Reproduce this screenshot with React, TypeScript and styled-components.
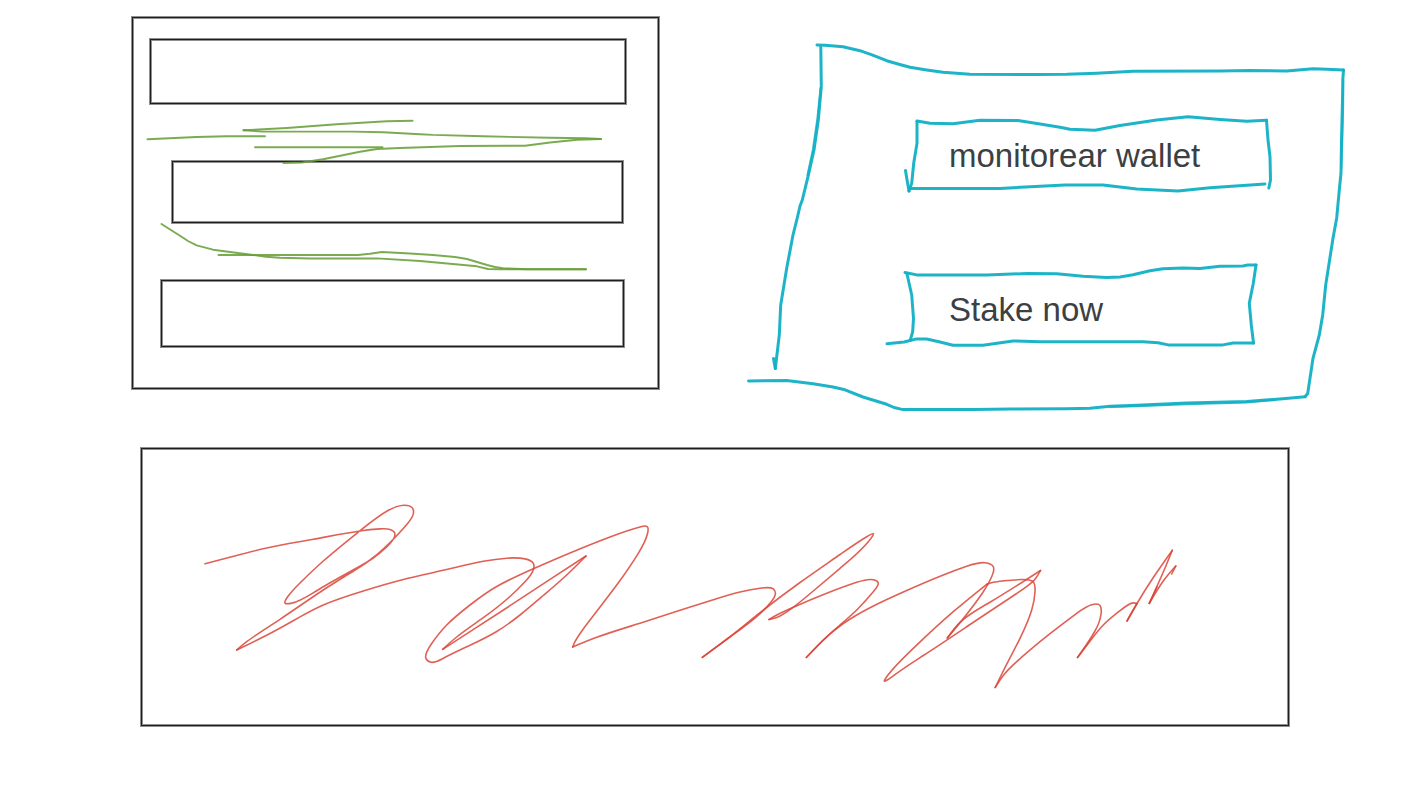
import React from "react";
import styled, { createGlobalStyle } from "styled-components";

const GlobalStyle = createGlobalStyle`
  * { box-sizing: border-box; }
  body {
    margin: 0;
    background: #ffffff;
    color: #3c4043;
    font-family: "Liberation Sans", Arial, Helvetica, sans-serif;
  }
`;

const Board = styled.main`
  padding: 17px 76px 74px 132px;
`;

const TopRow = styled.div`
  display: grid;
  grid-template-columns: 527fr 600fr;
  column-gap: 87px;
  align-items: start;
`;

const Frame = styled.div`
  border: 1px solid #1f1f1f;
  box-shadow: 0 0 0 1px #8f8f8f, inset 0 0 0 1px #8f8f8f;
`;

const ListFrame = styled(Frame)`
  position: relative;
  display: flex;
  flex-direction: column;
  gap: 57px;
  padding: 21px 0 41px;
`;

const Bar = styled(Frame)<{ $height: number; $left: number; $right: number }>`
  height: ${(p) => p.$height}px;
  margin: 0 ${(p) => p.$right}px 0 ${(p) => p.$left}px;
`;

const SignatureFrame = styled(Frame)`
  margin: 36px 57px 0 9px;
`;

const ActionPanel = styled.section`
  position: relative;
  display: flex;
  flex-direction: column;
  gap: 74px;
  padding: 96px 72px 65px 157px;
`;

const ActionButton = styled.button`
  position: relative;
  padding: 24px 46px 18px;
  border: 0;
  background: none;
  color: inherit;
  font: inherit;
  font-size: 33px;
  line-height: 38px;
  text-align: left;
  white-space: nowrap;
  cursor: pointer;
`;

const Ink = styled.svg`
  display: block;
  width: 100%;
  overflow: visible;
  fill: none;
  stroke-linecap: round;
  stroke-linejoin: round;
`;

const OverlayInk = styled(Ink)`
  position: absolute;
  inset: 0;
  height: 100%;
  pointer-events: none;
`;

type Point = [number, number];

const parse = (points: string): Point[] =>
  points
    .trim()
    .split(/\s+/)
    .map((pair) => pair.split(",").map(Number) as Point);

/* Marker strokes keep the short straight runs of the pen. */
const straight = (points: string): string => `M${points.trim().split(/\s+/).join("L")}`;

/* Natural cubic spline through the given pen positions. */
function curve(points: string): string {
  const p = parse(points);
  const n = p.length;
  if (n < 3) return straight(points);
  const h = p.slice(1).map((q, i) => Math.pow(Math.hypot(q[0] - p[i][0], q[1] - p[i][1]), 0.75));
  const slopes = h.map((len, i) => [0, 1].map((k) => (p[i + 1][k] - p[i][k]) / len));
  const m = p.map((_, i) => [...slopes[Math.min(i, n - 2)]]);
  for (let pass = 0; pass < 60; pass++) {
    for (let k = 0; k < 2; k++) {
      m[0][k] = (3 * slopes[0][k] - m[1][k]) / 2;
      for (let i = 1; i < n - 1; i++) {
        const a = h[i - 1];
        const b = h[i];
        m[i][k] =
          (3 * (b * slopes[i - 1][k] + a * slopes[i][k]) - b * m[i - 1][k] - a * m[i + 1][k]) /
          (2 * (a + b));
      }
      m[n - 1][k] = (3 * slopes[n - 2][k] - m[n - 2][k]) / 2;
    }
  }
  let path = `M${p[0].join(" ")}`;
  for (let i = 0; i < n - 1; i++) {
    const t = h[i] / 3;
    const c1 = [0, 1].map((k) => p[i][k] + m[i][k] * t);
    const c2 = [0, 1].map((k) => p[i + 1][k] - m[i + 1][k] * t);
    path += `C${[...c1, ...c2, ...p[i + 1]].map((v) => v.toFixed(2)).join(" ")}`;
  }
  return path;
}

interface StrokesProps {
  lines: string[];
  color: string;
  width: number;
  opacity: number;
  smooth?: boolean;
}

const Strokes = ({ lines, color, width, opacity, smooth }: StrokesProps) => (
  <g stroke={color} strokeWidth={width} strokeOpacity={opacity}>
    {lines.map((line) => (
      <path key={line} d={smooth ? curve(line) : straight(line)} />
    ))}
  </g>
);

const greenLines = [
  "147.5,139.3 196.7,137 226.7,136.2 265,136.2",
  "412.5,120.8 386.7,121.3 336.7,124.3 286.7,128 243.5,130.3",
  "243.5,130.3 263,131.6 353,131.6 383,132.2 420,134.2 433,134.9 483,136.3 550,137.8 585,138.3 601,139",
  "601,139 577,139.8 550,142.5 525,145.7 460,146 400,148 377,149 360,151.7 323,159.3 302,162.5 283.5,163",
  "255,147.2 382.5,147.2",
  "161.5,224 180,235.7 188,241 196.7,245.3 213,249.7 253,255 266,256.8 280,257.7 310,258.5 377,258.4 420,261 477,266.3 488,269 500,269.3 586,269.3",
  "218.5,255 358,255 370,253.8 381.7,252 410,253.5 433,255 455,257 467,259 487,265 495,267 503,268.2 527,269.3 586,269.3",
];

const panelLines = [
  "817,45 825,45.2 843,46.7 860,50.7 872,54.8 886.7,60.7 898,64 910,67.3 926.7,70 943,72.3 970,74.2 1040,74.5 1066.7,74.3 1096.7,73.2 1133,71.2 1220,71 1250,70.6 1286.7,71 1313,68.8 1326.7,69.3 1343.5,70",
  "1343.5,70 1342.8,80 1342.5,100 1341.5,140 1341,173 1339.3,190 1336.7,218 1333,238.3 1325.7,285 1322.7,315 1319.3,335 1313,358.3 1307.7,393.5 1305,396.7",
  "1305,396.7 1280,399 1246.7,401.5 1186.7,403 1136.7,405.3 1110,406.2 1090,408.3 1066.7,408.7 1011.7,408.9 973,409.5 902,409.4 894,407.5 886.7,404.3 863,397 845,389.8 833,387 813,383.7 786.7,380.5 748.5,381",
  "820.8,47 821.3,86.7 818.3,120 814,150 808,176.7 802.3,200 800,206 797.5,217 793,235 786.7,268.3 780.7,305 779.3,335 775.3,368.5",
  "775.3,368.5 773.5,358.5",
];

/* Second pass of the pen over the edges that come out heavier. */
const panelRetrace = [
  "820.5,88 817.2,120 812.8,150 807.5,175",
  "1343.2,80 1343.2,104 1342.3,140 1341.2,168",
  "1110,407 1136.7,406.2 1186.7,404.2 1246.7,402.6 1275,400",
];

const walletLines = [
  "917,121 930,123.3 953,123.7 980,120.2 1018,120.4 1040,124 1060,127.3 1070,129.3 1095,130.3 1120,125.5 1156.7,120 1188,116.8 1220,119.5 1246.7,121.2 1266.5,120.3",
  "1266.5,120.3 1268,140 1270,156.7 1270.5,180 1268.8,188",
  "917,121.5 917,143.3 913.7,163.3 911.7,183.3 909,191",
  "909,191 906.7,178 905.5,170.5",
  "910,188.6 1000,188.4 1040,186.2 1065,184.9 1103,184.9 1136.7,189.1 1178,190.9 1210,187.7 1265,183.9",
];

const stakeLines = [
  "905,272.5 916.7,274.9 986.7,275 1026.7,273.5 1056.7,273.7 1083,276.3 1106.7,277.4 1120,277 1133,274.7 1150,270.8 1163,268.7 1183,267.9 1200,268.4 1220,266.2 1243,266 1248,264.9 1256,265",
  "1256,265 1253.3,283.3 1249.3,303.3 1251.3,325 1253.5,343",
  "1253.5,343 1233,343 1223,344.9 1168,344.9 1158,342.8 1143,341.8 1040,341.7 1013,340.9 983,345.3 953,345.3 940,342 926.7,339 916.7,338.9 904,342 887,343.8",
  "906.9,273.5 911.7,295 913.5,318.3 912.7,331.7 910.3,340",
];

const signatureLines = [
  "205,563.7 231.7,556.7 266.7,548 313.3,539.3 360,531 380,528.9 390,529.5 394.7,533 393.7,538.5 386.7,547 373.3,558 356.7,568 316.7,590.7 291,603.4 285,603 287.5,597 300,583 323.3,561 360,530.7 388,510.5 404,505.2 412,507.5 413.5,513 408,523 395,537.5 373.3,557.5 356.7,569 323.3,590 280,619.3 246.7,641.7 236.7,650",
  "236.7,650 273.3,631.7 300,616.9 323.3,605 363.3,591 403.3,579.5 443.3,570.3 483.3,561.3 506.7,558.2 525,558.9 533.3,563.3 533.3,570 525,581.7 510,596.5 483.3,617.7 456.7,637 442.7,649.3",
  "442.7,649.3 470,631.7 510,605.7 550,579.3 586,556",
  "586,556 566.7,575 543.3,595.5 520,615 496.7,631.5 470,645.3 443.3,658.3 431,662.3 425.9,658.3 431.7,643.5 446.7,625 470,605 495,587.5 533.3,568.7 570,552.9 610,536.9 640,526.9 647.3,526.7 647.6,533.3 638.3,553.3 616.7,585 590,620 575,641.7 572.7,647",
  "572.7,647 596.7,637.3 640,623.2 680,610.3 713.3,599.7 740,592 761.7,588 773.3,588.9 775.5,593.3 770,603.3 756.7,616.7 730,637 702.3,657.3",
  "702.3,657.3 730,636.7 760,612.7 800,582.5 840,554.5 866.7,536.7 873.3,533.7 868.3,541.7 840,568.3 813.3,591 790,609.7 776.7,617.5 769,619.5",
  "769,619.5 774,616.5 793.3,607.3 826.7,593.3 856.7,582.3 873.3,579.7 878.2,582.7 873.3,591.7 856.7,610 840,625 826.7,636.8 806.3,657.5",
  "806.3,657.5 823.3,640 843.3,623.5 870,607.7 903.3,592 943.3,575 966.7,566.3 985,562.7 993.3,566.7 991.7,576.7 983.3,591.7 960,622.7 947.3,638",
  "947.3,638 960,622.3 990,602.2 1040.5,570.5",
  "1040.5,570.5 1035,579.3 1016.7,593.5 970,624.5 923.3,655.5 896.7,673.3 884.3,681 886.7,676.7 913.3,648.3 953.3,611.7 986.7,584.3",
  "986.7,584.3 993.3,582.3 1003.3,580.9 1026.7,579.7 1033.3,582 1035,591.7 1031.7,610 1020,638.3 1003.3,671 995.2,687.5",
  "995.2,687.5 1003.3,675.5 1016.7,661.7 1050,633.7 1076.7,613.3 1091.7,604.7 1099.5,605 1100.9,615 1095,631 1077.5,657.5",
  "1077.5,657.5 1090,641.2 1103.3,625 1120,610.7 1133.3,602.9 1137,603.5",
  "1137,603.5 1127,621",
  "1127,621 1137,603.5 1153.3,577.5 1172.3,550.3",
  "1172.3,550.3 1165,568 1149.3,603.3",
  "1149.3,603.3 1164,580 1175.8,566",
  "1175.8,566 1171.7,574",
  "1149.3,603.3 1157,587",
];

const blue = "#12b0c5";

export default function App() {
  return (
    <>
      <GlobalStyle />
      <Board>
        <TopRow>
          <ListFrame>
            <Bar $height={65} $left={17} $right={32} />
            <Bar $height={62} $left={39} $right={35} />
            <Bar $height={67} $left={28} $right={34} />
            <OverlayInk viewBox="133 18 525 370" preserveAspectRatio="none" aria-hidden="true">
              <Strokes lines={greenLines} color="#689f38" width={1.9} opacity={0.88} />
            </OverlayInk>
          </ListFrame>
          <ActionPanel>
            <OverlayInk viewBox="746 17 600 395" preserveAspectRatio="none" aria-hidden="true">
              <Strokes lines={panelLines} color={blue} width={3} opacity={0.95} />
              <Strokes lines={panelRetrace} color={blue} width={2} opacity={0.8} />
            </OverlayInk>
            <ActionButton type="button">
              monitorear wallet
              <OverlayInk viewBox="903 113 371 80" preserveAspectRatio="none" aria-hidden="true">
                <Strokes lines={walletLines} color={blue} width={3} opacity={0.95} />
              </OverlayInk>
            </ActionButton>
            <ActionButton type="button">
              Stake now
              <OverlayInk viewBox="903 267 371 80" preserveAspectRatio="none" aria-hidden="true">
                <Strokes lines={stakeLines} color={blue} width={3} opacity={0.95} />
              </OverlayInk>
            </ActionButton>
          </ActionPanel>
        </TopRow>
        <SignatureFrame>
          <Ink viewBox="142 449 1146 276" aria-hidden="true">
            <Strokes lines={signatureLines} color="#db4437" width={1.6} opacity={0.85} smooth />
          </Ink>
        </SignatureFrame>
      </Board>
    </>
  );
}
